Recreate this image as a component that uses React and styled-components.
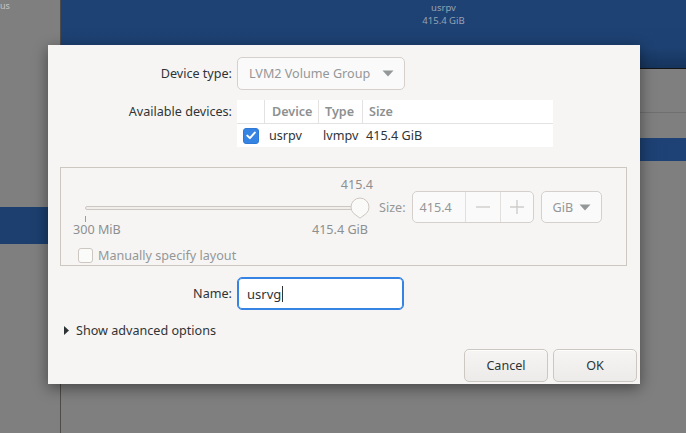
import React from 'react'
import styled, { createGlobalStyle } from 'styled-components'

const GlobalStyle = createGlobalStyle`
  html, body {
    margin: 0;
    padding: 0;
    background: #7f7f7f;
  }
  body {
    font-family: 'Noto Sans', 'Open Sans', sans-serif;
    font-size: 12.6px;
    color: #2e3436;
  }
  * { box-sizing: border-box; }
`

const Screen = styled.div`
  position: relative;
  width: 686px;
  height: 433px;
  overflow: hidden;
  display: grid;
  grid-template-columns: 61px 1fr;
  background: #7f7f7f;
`

const Sidebar = styled.div`
  border-right: 1px solid #4d4b49;
  display: flex;
  flex-direction: column;
  overflow: hidden;
`

const SideText = styled.div`
  font-size: 9px;
  line-height: 11px;
  color: #c4c4c4;
`

const SideSelected = styled.div`
  margin-top: 196px;
  height: 37px;
  background: #1c3f6f;
`

const Main = styled.div`
  display: flex;
  flex-direction: column;
`

const Banner = styled.div`
  height: 69px;
  background: linear-gradient(#1e4274 0%, #1d4172 70%, #16345c 100%);
  border-bottom: 1px solid #141414;
  display: flex;
  justify-content: center;
  padding-left: 140px;
`

const BannerText = styled.div`
  margin-top: 1px;
  display: flex;
  flex-direction: column;
  align-items: center;
  font-size: 9.5px;
  line-height: 13px;
  color: #97a2b3;
`

const Divider = styled.div`
  margin-top: 43px;
  height: 1px;
  background: #6f6f6f;
`

const SelectedBar = styled.div`
  margin-top: 25px;
  height: 23px;
  background: linear-gradient(90deg, #1c3f6f 80%, #1e4276 100%);
`

const Dialog = styled.div`
  position: absolute;
  left: 48px;
  top: 45px;
  width: 592px;
  height: 339px;
  background: #f6f5f4;
  box-shadow: 0 4px 14px rgba(0, 0, 0, 0.45);
  display: flex;
  flex-direction: column;
`

const Content = styled.div`
  padding: 12px 13px 0 12px;
  display: flex;
  flex-direction: column;
`

const FormRow = styled.div`
  display: grid;
  grid-template-columns: 172px 1fr;
  column-gap: 5px;
  align-items: ${(p) => p.$align || 'center'};
  margin-top: ${(p) => p.$top || 0}px;
`

const Label = styled.div`
  text-align: right;
  white-space: nowrap;
  padding-top: ${(p) => p.$pad || 0}px;
`

const Combo = styled.div`
  width: ${(p) => p.$w}px;
  height: ${(p) => p.$h || 33}px;
  border: 1px solid #d5d0cc;
  border-radius: 5px;
  background: #fafafa;
  display: flex;
  align-items: center;
  justify-content: space-between;
  padding: 0 ${(p) => p.$pr || 10}px 0 ${(p) => p.$pl || 11}px;
  color: #949798;
`

const Arrow = () => (
  <svg width="12" height="7" viewBox="0 0 12 7">
    <path d="M0.5 0.5 L11.5 0.5 L6 6.5 Z" fill="#949798" />
  </svg>
)

const Table = styled.div`
  width: 316px;
  background: #ffffff;
  display: grid;
  grid-template-columns: 27px 54px 44px 1fr;
`

const HeadCell = styled.div`
  height: 24px;
  line-height: 24px;
  padding-left: ${(p) => p.$pl || 6}px;
  border-left: ${(p) => (p.$first ? 'none' : '1px solid #e4e2e0')};
  border-bottom: 1px solid #e4e2e0;
  color: #8d9091;
  font-weight: 600;
`

const Cell = styled.div`
  height: 23px;
  line-height: 23px;
  padding-left: ${(p) => p.$pl || 5}px;
  display: flex;
  align-items: center;
  white-space: nowrap;
`

const Check = styled.div`
  width: ${(p) => p.$size}px;
  height: ${(p) => p.$size}px;
  border-radius: 3px;
  background: ${(p) => (p.$on ? '#3584e4' : '#fbfbfa')};
  border: 1px solid ${(p) => (p.$on ? '#2f78d4' : '#cdc7c2')};
  display: flex;
  align-items: center;
  justify-content: center;
  flex-shrink: 0;
`

const Frame = styled.div`
  margin-top: 20px;
  height: 99px;
  border: 1px solid #cdc7c2;
  padding: 8px 0 0 12px;
  display: flex;
  flex-direction: column;
`

const TopRow = styled.div`
  display: flex;
  align-items: flex-start;
`

const SliderBlock = styled.div`
  width: 300px;
  display: flex;
  flex-direction: column;
  color: #8d9091;
`

const ValueLabel = styled.div`
  height: 18px;
  line-height: 18px;
  text-align: right;
`

const TrackRow = styled.div`
  position: relative;
  height: 27px;
  padding-left: 12px;
  padding-right: 13px;
  display: flex;
  align-items: center;
`

const Track = styled.div`
  position: relative;
  flex: 1;
  height: 4px;
  border: 1px solid #cdc7c2;
  border-radius: 2px;
  background: #efeeec;
  &::before {
    content: '';
    position: absolute;
    left: -1px;
    top: 9px;
    width: 1px;
    height: 6px;
    background: #9c9c9a;
  }
`

const Handle = styled.svg`
  position: absolute;
  right: 2px;
  top: 2px;
`

const Marks = styled.div`
  height: 18px;
  line-height: 18px;
  display: flex;
  justify-content: space-between;
  padding-right: 5px;
`

const SizeGroup = styled.div`
  margin-top: 15px;
  margin-left: 6px;
  display: flex;
  align-items: center;
  color: #949798;
`

const Spin = styled.div`
  margin-left: 6px;
  width: 122px;
  height: 32px;
  border: 1px solid #d5d0cc;
  border-radius: 5px;
  background: #fafafa;
  display: grid;
  grid-template-columns: 52px 35px 1fr;
`

const SpinPart = styled.div`
  display: flex;
  align-items: center;
  justify-content: ${(p) => (p.$text ? 'flex-start' : 'center')};
  padding-left: ${(p) => (p.$text ? 7 : 0)}px;
  border-left: ${(p) => (p.$text ? 'none' : '1px solid #e2dfdc')};
`

const UnitWrap = styled.div`
  margin-left: 7px;
`

const CheckRow = styled.div`
  margin-top: 8px;
  padding-left: 5px;
  display: flex;
  align-items: center;
  gap: 5px;
  color: #949798;
`

const Entry = styled.div`
  width: 167px;
  height: 33px;
  border: 1px solid #3584e4;
  box-shadow: inset 0 0 0 1px #3584e4;
  border-radius: 5px;
  background: #ffffff;
  display: flex;
  align-items: center;
  padding-left: 9px;
  font-size: 13px;
`

const Caret = styled.span`
  display: inline-block;
  width: 1px;
  height: 16px;
  background: #2e3436;
  margin-left: 1px;
`

const Expander = styled.div`
  margin-top: 10px;
  padding-left: 4px;
  height: 20px;
  display: flex;
  align-items: center;
  gap: 7px;
`

const Actions = styled.div`
  margin-top: auto;
  padding: 0 3px 2px 0;
  display: flex;
  justify-content: flex-end;
  gap: 5px;
`

const Button = styled.div`
  width: 84px;
  height: 33px;
  border: 1px solid #cdc7c2;
  border-radius: 5px;
  background: linear-gradient(#f6f5f4, #edebe9);
  box-shadow: inset 0 1px rgba(255, 255, 255, 0.8);
  display: flex;
  align-items: center;
  justify-content: center;
  color: #2e3436;
`

const App = () => {
  return (
    <>
      <GlobalStyle />
      <Screen>
        <Sidebar>
          <SideText>us</SideText>
          <SideSelected />
        </Sidebar>
        <Main>
          <Banner>
            <BannerText>
              <div>usrpv</div>
              <div>415.4 GiB</div>
            </BannerText>
          </Banner>
          <Divider />
          <SelectedBar />
        </Main>

        <Dialog>
          <Content>
            <FormRow>
              <Label>Device type:</Label>
              <Combo $w={168}>
                LVM2 Volume Group
                <Arrow />
              </Combo>
            </FormRow>

            <FormRow $top={10} $align="start">
              <Label $pad={3}>Available devices:</Label>
              <Table>
                <HeadCell $first />
                <HeadCell $pl={7}>Device</HeadCell>
                <HeadCell>Type</HeadCell>
                <HeadCell>Size</HeadCell>
                <Cell $pl={6}>
                  <Check $on $size={16}>
                    <svg width="10" height="9" viewBox="0 0 10 9">
                      <path
                        d="M1.3 4.6 L3.9 7.1 L8.8 1.6"
                        fill="none"
                        stroke="#ffffff"
                        strokeWidth="2"
                        strokeLinecap="round"
                        strokeLinejoin="round"
                      />
                    </svg>
                  </Check>
                </Cell>
                <Cell>usrpv</Cell>
                <Cell>lvmpv</Cell>
                <Cell $pl={4}>415.4 GiB</Cell>
              </Table>
            </FormRow>

            <Frame>
              <TopRow>
                <SliderBlock>
                  <ValueLabel>415.4</ValueLabel>
                  <TrackRow>
                    <Track />
                    <Handle width="22" height="24" viewBox="0 0 22 24">
                      <path
                        d="M11 22.2 L4.6 17.4 A9 9 0 1 1 17.4 17.4 Z"
                        fill="#fafaf9"
                        stroke="#cdc7c2"
                        strokeWidth="1"
                      />
                    </Handle>
                  </TrackRow>
                  <Marks>
                    <span>300 MiB</span>
                    <span>415.4 GiB</span>
                  </Marks>
                </SliderBlock>
                <SizeGroup>
                  Size:
                  <Spin>
                    <SpinPart $text>415.4</SpinPart>
                    <SpinPart>
                      <svg width="14" height="14" viewBox="0 0 14 14">
                        <path d="M0 7 H14" stroke="#cfcdca" strokeWidth="1.4" />
                      </svg>
                    </SpinPart>
                    <SpinPart>
                      <svg width="14" height="14" viewBox="0 0 14 14">
                        <path d="M0 7 H14 M7 0 V14" stroke="#cfcdca" strokeWidth="1.4" />
                      </svg>
                    </SpinPart>
                  </Spin>
                  <UnitWrap>
                    <Combo $w={61} $h={32} $pl={11} $pr={10}>
                      GiB
                      <Arrow />
                    </Combo>
                  </UnitWrap>
                </SizeGroup>
              </TopRow>
              <CheckRow>
                <Check $size={15} />
                Manually specify layout
              </CheckRow>
            </Frame>

            <FormRow $top={11}>
              <Label>Name:</Label>
              <Entry>
                usrvg
                <Caret />
              </Entry>
            </FormRow>

            <Expander>
              <svg width="5" height="9" viewBox="0 0 5 9">
                <path d="M0 0 L5 4.5 L0 9 Z" fill="#2e3436" />
              </svg>
              Show advanced options
            </Expander>
          </Content>

          <Actions>
            <Button>Cancel</Button>
            <Button>OK</Button>
          </Actions>
        </Dialog>
      </Screen>
    </>
  )
}

export default App
